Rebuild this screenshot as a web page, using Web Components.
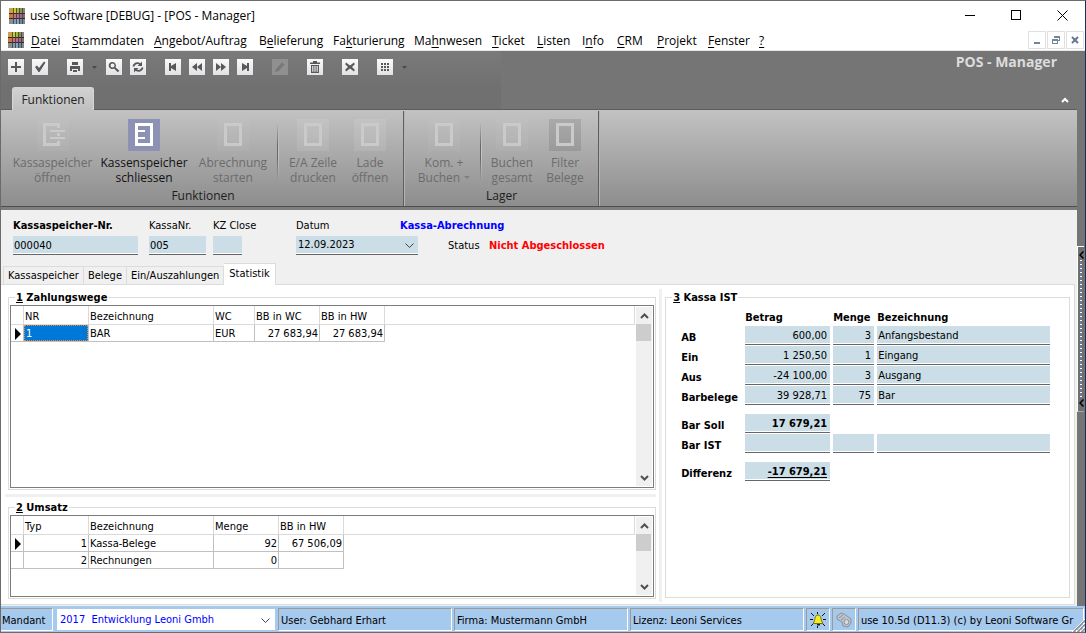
<!DOCTYPE html>
<html lang="de">
<head>
<meta charset="utf-8">
<title>use Software - POS - Manager</title>
<style>
  body {
    margin: 0;
    --ui: "Open Sans", "Noto Sans", sans-serif;
    --form: "DejaVu Sans Condensed", "DejaVu Sans", sans-serif;
    --field: #cbdde6;
    --line: #dcdcdc;
    font: 11px/16px var(--form);
    color: #000;
  }
</style>
</head>
<body>
<pos-window>
  <title-bar slot="title">use Software [DEBUG] - [POS - Manager]</title-bar>
  <menu-bar slot="menu"></menu-bar>
  <tool-bar slot="work" heading="POS - Manager"></tool-bar>
  <ribbon-bar slot="work" tab="Funktionen">
    <ribbon-group label="Funktionen">
      <ribbon-button style="--w:91px" icon="open" disabled>Kassaspeicher<br>öffnen</ribbon-button>
      <ribbon-button style="--w:92px" icon="shut">Kassenspeicher<br>schliessen</ribbon-button>
      <ribbon-button style="--w:86px" icon="box" disabled>Abrechnung<br>starten</ribbon-button>
      <ribbon-rule></ribbon-rule>
      <ribbon-button style="--w:66px" icon="box" tile="light" disabled>E/A Zeile<br>drucken</ribbon-button>
      <ribbon-button style="--w:48px" icon="box" tile="light" disabled>Lade<br>öffnen</ribbon-button>
    </ribbon-group>
    <ribbon-group label="Lager">
      <ribbon-button style="--w:70px" icon="box" disabled menu>Kom. +<br>Buchen</ribbon-button>
      <ribbon-rule></ribbon-rule>
      <ribbon-button style="--w:58px" icon="box" disabled>Buchen<br>gesamt</ribbon-button>
      <ribbon-button style="--w:48px" icon="box" tile="dark" disabled>Filter<br>Belege</ribbon-button>
    </ribbon-group>
  </ribbon-bar>
  <record-head slot="work"></record-head>
  <tab-pages slot="work" tabs="Kassaspeicher|Belege|Ein/Auszahlungen|Statistik" active="3">
    <group-box slot="upper" key="1" label="Zahlungswege"><data-grid source="payments"></data-grid></group-box>
    <group-box slot="lower" key="2" label="Umsatz"><data-grid source="sales"></data-grid></group-box>
    <group-box slot="side" key="3" label="Kassa IST"><cash-sheet></cash-sheet></group-box>
  </tab-pages>
  <side-splitter slot="edge"></side-splitter>
  <status-bar slot="status"></status-bar>
</pos-window>

<script>
const define = (name, css, html) => customElements.define(name, class extends HTMLElement {
  connectedCallback() {
    if (this.shadowRoot) return;
    const t = document.createElement('template');
    t.innerHTML = `<style>*{box-sizing:border-box}button{font:inherit;color:inherit;background:none;border:0;padding:0;margin:0}${css}</style>` +
      (typeof html === 'function' ? html(this) : html);
    this.attachShadow({ mode: 'open' }).append(t.content.cloneNode(true));
  }
});

/* Data */
const grids = {
  payments: {
    cols: [['NR', 65], ['Bezeichnung', 125], ['WC', 41], ['BB in WC', 65, 1], ['BB in HW', 65, 1]],
    rows: [['1', 'BAR', 'EUR', '27 683,94', '27 683,94']], selected: true
  },
  sales: {
    cols: [['Typ', 65, 1], ['Bezeichnung', 125], ['Menge', 65, 1], ['BB in HW', 65, 1]],
    rows: [['1', 'Kassa-Belege', '92', '67 506,09'], ['2', 'Rechnungen', '0', '']]
  }
};

const plaid = `<svg width="16" height="16" viewBox="0 0 16 16" shape-rendering="crispEdges" aria-hidden="true">
  <path fill="#c9a24a" d="M0 0h4v5H0z"/><path fill="#c3cf2f" d="M4 0h3v5H4z"/><path fill="#a5b83a" d="M7 0h3v5H7z"/><path fill="#7f9a4c" d="M10 0h3v5h-3z"/><path fill="#8a8578" d="M13 0h3v5h-3z"/>
  <path fill="#c97842" d="M0 5h4v6H0z"/><path fill="#c9707c" d="M4 5h3v6H4z"/><path fill="#b56f9d" d="M7 5h3v6H7z"/><path fill="#9c6a93" d="M10 5h3v6h-3z"/><path fill="#8d6a66" d="M13 5h3v6h-3z"/>
  <path fill="#8d8f8c" d="M0 11h4v5H0z"/><path fill="#76a0b8" d="M4 11h3v5H4z"/><path fill="#86a8c6" d="M7 11h3v5H7z"/><path fill="#5f8fa6" d="M10 11h3v5h-3z"/><path fill="#7d8894" d="M13 11h3v5h-3z"/>
  <path fill="#3a2a2c" d="M0 5h16v1H0zM0 10h16v1H0z"/><path fill="#4a3433" d="M4 0h1v16H4zM7 0h1v16H7zM10 0h1v16h-1zM13 0h1v16h-1z" opacity=".8"/></svg>`;

define('pos-window', `
  :host{display:flex;flex-direction:column;min-height:100vh;border:1px solid #6b6b6b;border-right-color:#1c2f5c;box-sizing:border-box;background:#fff}
  .mid{display:flex;flex:1;background:#757575}
  .work{display:flex;flex-direction:column;flex:1;min-width:0;background:#f0f0f0}
`, `<slot name="title"></slot><slot name="menu"></slot>
  <div class="mid"><main class="work"><slot name="work"></slot></main><slot name="edge"></slot></div>
  <slot name="status"></slot>`);

define('title-bar', `
  :host{display:flex;align-items:center;height:29px;padding-left:8px;font:12px/16px var(--ui)}
  .t{flex:1;margin-left:5px}
  button{width:46px;height:29px;display:grid;place-items:center}
  svg{display:block} button path,button rect{fill:none;stroke:#000}
`, `${plaid}<span class="t"><slot></slot></span>
  <button aria-label="Minimieren"><svg width="11" height="11"><path d="M0 5.500h10"/></svg></button>
  <button aria-label="Maximieren"><svg width="11" height="11"><rect x=".5" y=".5" width="9" height="9"/></svg></button>
  <button aria-label="Schließen"><svg width="11" height="11"><path d="M.5.5l10 10M10.500.5l-10 10"/></svg></button>`);

define('menu-bar', `
  :host{display:flex;align-items:center;height:21px;padding-left:7px;border-bottom:1px solid #e6e6e6;box-sizing:border-box;font:12px/16px var(--ui)}
  nav{flex:1;display:grid;grid-template-columns:41px 82px 105px 74px 81px 78px 45px 45px 35px 40px 51px 51px auto;justify-content:start;margin-left:7px;padding-top:2px}
  nav button{text-align:left;white-space:nowrap}
  u{text-underline-offset:2px}
  .mdi{display:flex;gap:1px;margin-right:1px}
  .mdi button{width:18px;height:18px;border:1px solid #e0e0e0;display:grid;place-items:center}
  .mdi svg{display:block}
`, `${plaid}<nav>${['_Datei', '_Stammdaten', '_Angebot/Auftrag', 'B_elieferung', 'Fa_kturierung', 'Ma_hnwesen', '_Ticket', '_Listen', 'I_nfo', '_CRM', '_Projekt', '_Fenster', '_?']
    .map(s => `<button>${s.replace(/_(.)/, '<u>$1</u>')}</button>`).join('')}</nav>
  <div class="mdi">
    <button aria-label="Kind minimieren"><svg width="10" height="10"><path fill="#75869a" d="M2 7h6v2H2z"/></svg></button>
    <button aria-label="Kind wiederherstellen"><svg width="10" height="10" shape-rendering="crispEdges"><path fill="none" stroke="#75869a" d="M3.500 3V1.500h5v4H7M3 2.500h6M1.500 4.500h5v4h-5zM1 5.500h6"/></svg></button>
    <button aria-label="Kind schließen"><svg width="10" height="10"><path stroke="#66778b" stroke-width="2" d="M2 2l6 6M8 2l-6 6"/></svg></button>
  </div>`);

const tool = {
  plus: '<path d="M7 3h2v4h4v2H9v4H7V9H3V7h4z"/>',
  check: '<path d="M3 8l2-1.500 2 2.500 5-6.500 1.500 1L7.500 13H6.500z"/>',
  print: '<path d="M5 3h6v3H5zM3 7h10v5h-2v-2H5v2H3z"/><path d="M6 11h4v2H6z"/>',
  find: '<path fill-rule="evenodd" d="M6.500 3a3.500 3.500 0 0 1 3 5.200l3.800 3.500-1.500 1.500-3.700-3.800A3.500 3.500 0 1 1 6.500 3zm0 1.500a2 2 0 1 0 0 4 2 2 0 0 0 0-4z"/>',
  sync: '<path d="M2.500 7.500C3 4 7 2 10.500 4.200L12 2.500V7H7.500l1.600-1.500C7 4.400 5 5.500 4.500 7.500zM13.500 8.500c-.5 3.500-4.500 5.500-8 3.300L4 13.500V9h4.500l-1.600 1.500c2.100 1.100 4.100 0 4.600-2z"/>',
  first: '<path d="M4 4h2v3l5-3v8L6 9v3H4z"/>',
  prev: '<path d="M8 4v8L3 8zM13 4v8L8 8z"/>',
  next: '<path d="M8 4v8l5-4zM3 4v8l5-4z"/>',
  last: '<path d="M12 4h-2v3L5 4v8l5-3v3h2z"/>',
  edit: '<path d="M3 13l1-3 6-6.500 2.500 2.200L6.500 12z"/>',
  bin: '<path fill-rule="evenodd" d="M6 2h4v1.500h3V5H3V3.500h3zM4 6h8v8H4zm1.200 1v5.800h1.200V7zm2.200 0v5.800h1.200V7zm2.200 0v5.800h1.200V7z"/>',
  cross: '<path d="M4 3.500L8 6.500l4-3 .8 1.700L10 8l2.800 2.800-.8 1.700L8 9.500l-4 3-.8-1.700L6 8 3.200 5.200z"/>',
  dots: '<path d="M4 4h2v2H4zM7 4h2v2H7zM10 4h2v2h-2zM4 7h2v2H4zM7 7h2v2H7zM10 7h2v2h-2zM4 10h2v2H4zM7 10h2v2H7zM10 10h2v2h-2z"/>'
};
const tb = (icon, label, off) => `<button aria-label="${label}"${off ? ' disabled' : ''}><svg width="16" height="16" fill="#585858">${tool[icon]}</svg></button>`;
const more = l => `<button class="more" aria-label="${l}"><svg width="5" height="3"><path fill="#4b4b4b" d="M0 0h5L2.500 3z"/></svg></button>`;

define('tool-bar', `
  :host{display:flex;align-items:flex-start;height:36px;padding:8px 20px 0 7px;box-sizing:border-box;background:linear-gradient(#7a7a7a,#707070) 0 0/500px 100% no-repeat #757575}
  .g{display:flex;gap:8px;margin-right:19px}
  button{width:16px;height:16px;background:linear-gradient(#fafafa,#e2e2e6)}
  button[disabled]{background:#909090} button[disabled] svg{fill:#787878}
  svg{display:block}
  .more{background:none;width:7px;display:grid;place-items:center}
  h1{margin:-6px 0 0 auto;font:bold 14px/18px var(--ui);color:#dcdcdc}
`, h => `<div class="g">${tb('plus', 'Neu')}${tb('check', 'Speichern')}</div>
  <div class="g">${tb('print', 'Drucken')}${more('Druckoptionen')}${tb('find', 'Suchen')}${tb('sync', 'Aktualisieren')}</div>
  <div class="g">${tb('first', 'Erster')}${tb('prev', 'Zurück')}${tb('next', 'Vor')}${tb('last', 'Letzter')}</div>
  <div class="g">${tb('edit', 'Bearbeiten', 1)}</div><div class="g">${tb('bin', 'Löschen')}</div>
  <div class="g">${tb('cross', 'Abbrechen')}</div><div class="g">${tb('dots', 'Raster')}${more('Rasteroptionen')}</div>
  <h1>${h.getAttribute('heading')}</h1>`);

define('ribbon-bar', `
  :host{display:block;background:#757575;font:12px/15px var(--ui)}
  .tabs{display:flex;align-items:flex-end;height:23px;padding:0 8px 0 11px;background:linear-gradient(#707070,#707070) 0 0/500px 100% no-repeat;border-bottom:1px solid #5c5c5c}
  .tab{height:23px;margin-bottom:-1px;padding:0 8px;min-width:82px;border:1px solid #d6d6d6;border-bottom:0;border-radius:3px 3px 0 0;background:linear-gradient(#d2d2d2,#c0c0c0);color:#222}
  .fold{margin-left:auto;width:8px;height:18px} svg{display:block}
  .strip{display:flex;height:97px;padding-left:2px;background:linear-gradient(#c2c2c2,#8d8d8d);border-bottom:1px solid #4e4e4e}
  .foot{height:3px;background:#7e7e7e}
`, h => `<div class="tabs"><button class="tab">${h.getAttribute('tab')}</button>
  <button class="fold" aria-label="Menüband reduzieren"><svg width="8" height="6"><path d="M1 5l3-3 3 3" fill="none" stroke="#fff" stroke-width="2"/></svg></button></div>
  <div class="strip"><slot></slot></div><div class="foot"></div>`);

define('ribbon-group', `
  :host{display:flex;flex-direction:column;border-right:1px solid #5e5e5e;box-shadow:1px 0 #b4b4b4;margin-right:1px;margin-top:1px}
  .row{display:flex;flex:1;padding:0 9px 0 4px}
  .cap{text-align:center;color:#1e1e1e;padding-bottom:3px}
`, h => `<div class="row"><slot></slot></div><div class="cap">${h.getAttribute('label')}</div>`);

define('ribbon-rule', `:host{display:block;width:2px;height:58px;margin:12px 1px 0;background:linear-gradient(transparent,#666 40%,#666 60%,transparent) 0 0/1px 100% no-repeat,linear-gradient(transparent,#c8c8c8 50%,transparent) 1px 0/1px 100% no-repeat}`, '');

define('ribbon-button', `
  :host{display:block;width:var(--w);padding-top:8px;box-sizing:border-box}
  button{display:flex;flex-direction:column;align-items:center;width:100%;white-space:nowrap;color:#111}
  button[disabled]{color:#6c6c6c}
  .i{width:32px;height:32px;margin-bottom:4px;background:#8d91b4}
  [disabled] .i{background:#ffffff0a}
  :host([tile=light]) .i{background:#ffffff18} :host([tile=dark]) .i{background:#0000001a}
  svg{display:block;fill:none;stroke:#fff;stroke-width:3}
  [disabled] svg{stroke:#cacaca}
  .bar{stroke-width:2}
  .txt{display:block}
  :host([menu]) .txt::after{content:"";display:inline-block;border:3px solid transparent;border-top-color:#808080;border-bottom:0;margin:0 0 3px 4px}
`, h => {
  const d = {
    box: '<path d="M8.500 5.500h15v20h-15z"/>',
    open: '<path d="M21.500 9V5.500h-14v20h14V22M21.500 14v3"/><path class="bar" d="M13 12h15M13 19h15"/>',
    shut: '<path d="M8.500 5.500h15v20h-15z"/><path class="bar" d="M10 12h7M10 19h7"/>'
  }[h.getAttribute('icon')];
  return `<button${h.hasAttribute('disabled') ? ' disabled' : ''}><span class="i"><svg width="32" height="32">${d}</svg></span><span class="txt"><slot></slot></span></button>`;
});

const fieldCss = `
  input,select{display:block;width:100%;height:19px;margin:0;padding:1px 1px 1px;border:0;border-bottom:1px solid #666;border-radius:0;font:inherit;color:#000;appearance:none;outline:0;
    background:linear-gradient(var(--field),var(--field)) 0 0/100% 17px no-repeat #fff}`;

define('record-head', `${fieldCss}
  :host{display:grid;grid-template-columns:136px 64px 83px 104px 48px 41px 1fr;grid-template-rows:17px 19px;padding:8px 0 8px 12px;row-gap:1px;box-sizing:border-box}
  .w1{width:125px}.w2{width:57px}.w3{width:29px}
  .w4{grid-column:span 2;width:122px;position:relative}
  .w4 select{padding-left:2px}
  .w4 svg{position:absolute;right:4px;top:7px;pointer-events:none}
  .span{grid-column:span 3} b.blue{color:#00f} b.red{color:#f00}
  .l{padding-top:2px}
`, `<label for="a"><b>Kassaspeicher-Nr.</b></label><label for="b">KassaNr.</label><label for="c">KZ Close</label><label for="d">Datum</label><b class="blue span">Kassa-Abrechnung</b>
  <div class="w1"><input id="a" value="000040"></div><div class="w2"><input id="b" value="005"></div><div class="w3"><input id="c"></div>
  <div class="w4"><select id="d"><option>12.09.2023</option></select><svg width="9" height="6"><path d="M.5.5l4 4 4-4" fill="none" stroke="#444"/></svg></div>
  <span class="l">Status</span><b class="red l">Nicht&nbsp;Abgeschlossen</b>`);

define('tab-pages', `
  :host{display:flex;flex-direction:column;flex:1;padding-right:2px}
  .tabs{display:flex;align-items:flex-end;height:21px;padding-left:2px}
  .tabs button{height:18px;padding:0 4px;border:1px solid var(--line);border-bottom:0;border-left-width:0;white-space:nowrap;line-height:18px}
  .tabs button:first-child{border-left-width:1px}
  .tabs button.on{height:22px;margin-bottom:-1px;padding:0 5px 2px;background:#fff;position:relative}
  .page{flex:1;display:flex;background:#fff;border:1px solid var(--line);border-left:0;margin-bottom:1px;padding:4px 4px 2px}
  .left{flex:650;display:flex;flex-direction:column;min-width:0;padding:1px 1px 3px 3px}
  .up{flex:2;display:flex;min-height:200px}.low{flex:1;display:flex}
  .hbar{height:3px;background:#f0f0f0;margin:4px 0 3px -3px}
  .vbar{width:3px;background:#f0f0f0;margin:0 3px 0 2px}
  .right{flex:406;display:flex;min-width:0;padding:1px 0 4px}
`, h => `<div class="tabs">${h.getAttribute('tabs').split('|').map((t, i) => `<button${i == h.getAttribute('active') ? ' class="on"' : ''}>${t}</button>`).join('')}</div>
  <div class="page"><div class="left"><div class="up"><slot name="upper"></slot></div><div class="hbar"></div><div class="low"><slot name="lower"></slot></div></div>
  <div class="vbar"></div><div class="right"><slot name="side"></slot></div></div>`);

define('group-box', `
  :host{display:flex;flex:1;min-width:0}
  fieldset{flex:1;min-width:0;margin:0;border:1px solid var(--line);padding:0 1px 1px;display:flex}
  legend{padding:0 1px;margin-left:5px;font-weight:bold;line-height:15px}
`, h => `<fieldset><legend><u>${h.getAttribute('key')}</u> ${h.getAttribute('label')}</legend><slot></slot></fieldset>`);

define('scroll-bar', `
  :host{display:flex;flex-direction:column;width:16px;background:#f0f0f0;margin:1px 1px 1px 0}
  button{height:17px;display:grid;place-items:center} .thumb{height:17px;background:#cdcdcd;margin-right:1px} .fill{flex:1}
  path{fill:none;stroke:#505050;stroke-width:2}
`, `<button aria-label="Nach oben"><svg width="9" height="6"><path d="M1 5l3.500-3.500L8 5"/></svg></button><div class="thumb"></div><div class="fill"></div>
  <button aria-label="Nach unten"><svg width="9" height="6"><path d="M1 1l3.500 3.500L8 1"/></svg></button>`);

define('data-grid', `
  :host{display:flex;flex:1;border:1px solid #7c7c7c;min-width:0}
  .v{flex:1;padding-right:1px;min-width:0}
  table{width:100%;table-layout:fixed;border-spacing:0}
  th,td{height:17px;padding:2px 1px 0;font-weight:normal;text-align:left;border:solid #c0c0c0;border-width:0 1px 1px 0;white-space:nowrap;line-height:14px}
  th{height:19px;padding-top:3px;border-color:#dadada;line-height:15px}
  td.n{text-align:right} td:last-child{border:0}
  td:first-child{padding:1px 0 0 4px} td svg{display:block}
  td.sel{padding:0}.sel span{display:block;height:16px;background:#0078d7;color:#fff;outline:1px dotted #ff8728;outline-offset:-1px;padding:2px 0 0 2px}
`, h => {
  const g = grids[h.getAttribute('source')];
  const cell = (v, r, c) => r == 0 && c == 0 && g.selected ? `<td class="sel"><span>${v}</span></td>` : `<td${g.cols[c][2] || /,/.test(v) ? ' class="n"' : ''}>${v}</td>`;
  return `<div class="v"><table><colgroup><col style="width:13px">${g.cols.map(c => `<col style="width:${c[1]}px">`).join('')}<col></colgroup>
    <thead><tr><th></th>${g.cols.map(c => `<th>${c[0]}</th>`).join('')}<th></th></tr></thead>
    <tbody>${g.rows.map((row, r) => `<tr><td>${r ? '' : '<svg width="6" height="12"><path d="M0 0l6 6-6 6z"/></svg>'}</td>${row.map((v, c) => cell(v, r, c)).join('')}<td></td></tr>`).join('')}</tbody></table></div><scroll-bar></scroll-bar>`;
});

define('cash-sheet', `${fieldCss}
  :host{display:block;flex:1;padding:4px 18px 0 14px}
  .r{display:grid;grid-template-columns:61px 85px 41px 1fr;gap:3px;margin-bottom:1px}
  .gap{margin-top:9px}
  b{white-space:nowrap;line-height:14px;padding-top:2px}
  label{font-weight:bold;white-space:nowrap;line-height:15px;padding-top:4px}
  .n{text-align:right;padding-right:3px} .t{font-weight:bold}
  .u{text-decoration:underline;text-underline-offset:2px}
`, () => {
  const f = (id, v, c, l) => `<input ${id ? `id="${id}"` : `aria-label="${l}"`} class="${c}" value="${v}">`;
  const rows = [['AB', '600,00', '3', 'Anfangsbestand'], ['Ein', '1 250,50', '1', 'Eingang'], ['Aus', '-24 100,00', '3', 'Ausgang'], ['Barbelege', '39 928,71', '75', 'Bar'],
    ['Bar Soll', '17 679,21'], ['Bar IST', '', '', ''], ['Differenz', '-17 679,21']];
  return `<div class="r"><span></span><b>Betrag</b><b>Menge</b><b>Bezeichnung</b></div>` + rows.map((r, i) =>
    `<div class="r${i == 4 || i == 6 ? ' gap' : ''}"><label for="r${i}">${r[0]}</label>${f('r' + i, r[1], 'n' + (i > 3 ? ' t' : '') + (i == 6 ? ' u' : ''))}` +
    (r.length > 2 ? f('', r[2], 'n', r[0] + ' Menge') + f('', r[3], '', r[0] + ' Bezeichnung') : '') + '</div>').join('');
});

define('side-splitter', `
  :host{display:flex;align-items:center;width:8px;background:#757575}
  button{display:flex;flex-direction:column;align-items:center;justify-content:space-between;width:7px;height:166px;padding:4px 0;border:1px solid #a8a8a8;border-top-color:#fff;border-left-color:#fff;border-right:0;background:#6f6f6f}
  i{flex:1;width:2px;margin:1px 0;background:repeating-linear-gradient(#fff 0 1px,#757575 1px 2px,#4f86b8 2px 3px,#757575 3px 4px)}
  svg{display:block}
`, () => { const a = '<svg width="5" height="8"><path d="M4.500.5L1 4l3.500 3.500" fill="none" stroke="#000" stroke-width="1.500"/></svg>'; return `<button aria-label="Seitenleiste">${a}<i></i>${a}</button>`; });

define('status-bar', `
  :host{display:flex;gap:2px;height:26px;padding:2px 1px 1px 0;box-sizing:border-box;background:#a6c9ee;position:relative}
  .p{border:1px solid #fff;border-top-color:#9a9a9a;border-left-color:#9a9a9a;padding:1px 2px 0;line-height:22px;white-space:nowrap;flex:174 1 0;min-width:0}
  .m{flex:none;width:52px;padding-left:1px;padding-right:1px;border-left:0}
  .s{flex:none;width:221px;position:relative;padding:0 1px 0 2px}
  select{display:block;width:100%;height:21px;margin-top:1px;border:1px solid #fff;border-radius:0;background:#fff;font:inherit;color:#00f;appearance:none;padding:1px 2px 0;outline:0;white-space:pre}
  .s svg{position:absolute;right:6px;top:10px;pointer-events:none}
  .p.i{flex:none;width:24px;display:grid;place-items:center;padding:0}
  .p.l{flex:228 1 0}
  .grip{position:absolute;right:0;bottom:0}
  svg{display:block}
`, `<div class="p m"><label for="m">Mandant</label></div>
  <div class="s"><select id="m"><option>2017&nbsp; Entwicklung Leoni Gmbh</option></select><svg width="9" height="6"><path d="M.5.5l4 4 4-4" fill="none" stroke="#444"/></svg></div>
  <div class="p">User: Gebhard Erhart</div><div class="p">Firma: Mustermann GmbH</div><div class="p">Lizenz: Leoni Services</div>
  <div class="p i"><svg width="16" height="16"><path stroke="#111" d="M1 1l3 3M15 1l-3 3M0 7.500h3M13 7.500h3M1 14l3-3M15 14l-3-3M7.500 0v2M7.500 14v2" fill="none"/><path d="M8 3c-3 0-3 4-3.500 6L3 11.500h10L11.500 9C11 7 11 3 8 3z" fill="#f5ee1f" stroke="#77701a"/><path d="M7 12h3v1.500H7z" fill="#222"/></svg></div>
  <div class="p i"><svg width="16" height="16"><path d="M1 4l4-3 3 1 3 2 4 3v4l-3 4-5-1-1-4-5-3z" fill="#bcc4cd" stroke="#8a929c"/><path d="M3 6l4-3M5 8l4-3" stroke="#8a929c" fill="none"/><circle cx="10.500" cy="10" r="2.500" fill="#d8dadd" stroke="#8a929c"/></svg></div>
  <div class="p l">use 10.5d (D11.3) (c) by Leoni Software Gr</div>
  <svg class="grip" width="13" height="13"><path d="M0 13L13 0M4 13l9-9M8 13l5-5" stroke="#fff"/><path d="M1.500 13L13 1.500M5.500 13L13 5.500M9.500 13L13 9.500" stroke="#8e8e8e" stroke-width="1.500"/></svg>`);
</script>
</body>
</html>
